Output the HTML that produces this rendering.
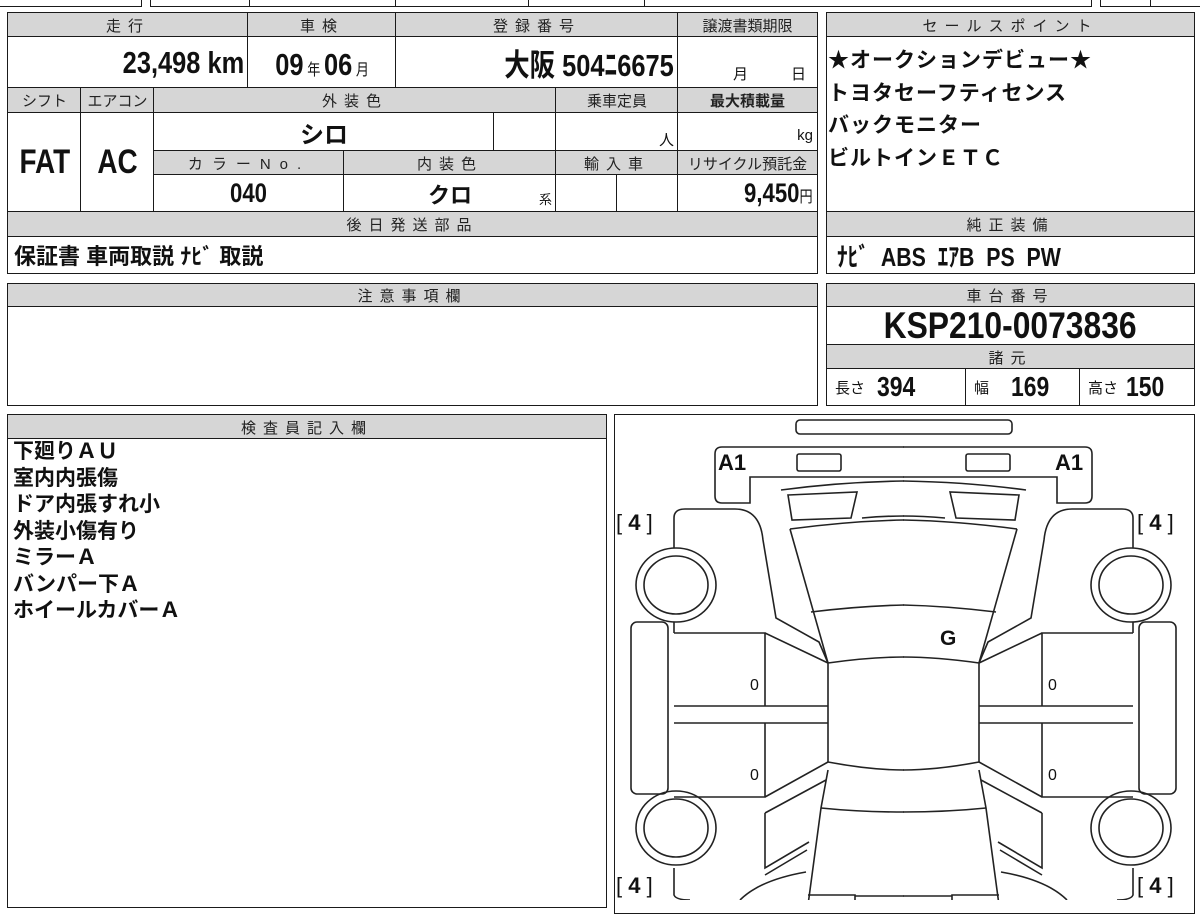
<!DOCTYPE html>
<html><head><meta charset="utf-8"><style>
body{margin:0;width:1200px;height:900px;overflow:hidden;background:#fff;position:relative;font-family:"Liberation Sans","Noto Sans CJK JP",sans-serif;color:#111}
.c{position:absolute;box-sizing:border-box;border:1.5px solid #1a1a1a;background:#fff}
.h{background:#d6d6d6;text-align:center;font-size:15px;letter-spacing:7px;color:#222;display:flex;align-items:center;justify-content:center}
.v{font-family:"Liberation Sans Narrow","Liberation Sans","Noto Sans CJK JP",sans-serif;font-weight:bold;display:flex;align-items:center}
.n{display:inline-block;transform:scaleX(.82);transform-origin:right center;white-space:nowrap}
.s{font-size:13px;font-weight:normal}
.t{position:absolute;font-weight:bold;font-family:"Liberation Sans","Noto Sans CJK JP",sans-serif}
</style></head><body>
<div class="c" style="left:-2px;top:-4px;width:144px;height:11px"></div>
<div class="c" style="left:150px;top:-4px;width:101px;height:11px"></div>
<div class="c" style="left:249px;top:-4px;width:148px;height:11px"></div>
<div class="c" style="left:395px;top:-4px;width:135px;height:11px"></div>
<div class="c" style="left:528px;top:-4px;width:118px;height:11px"></div>
<div class="c" style="left:644px;top:-4px;width:448px;height:11px"></div>
<div class="c" style="left:1100px;top:-4px;width:52px;height:11px"></div>
<div class="c" style="left:1150px;top:-4px;width:52px;height:11px"></div>

<div class="c h" style="left:7px;top:12px;width:242px;height:26px">走行</div>
<div class="c h" style="left:247px;top:12px;width:150px;height:26px">車検</div>
<div class="c h" style="left:395px;top:12px;width:284px;height:26px">登録番号</div>
<div class="c h" style="left:677px;top:12px;width:141px;height:26px;letter-spacing:0">譲渡書類期限</div>
<div class="c v" style="left:7px;top:36px;width:242px;height:53px;justify-content:flex-end;padding-right:4px;font-size:31px"><span class="n">23,498 km</span></div>
<div class="c v" style="left:247px;top:36px;width:150px;height:53px;justify-content:center;font-size:31px;padding-top:4px"><span class="n" style="transform-origin:center">09<span class="s" style="font-size:16px"> 年 </span>06<span class="s" style="font-size:16px"> 月</span></span></div>
<div class="c v" style="left:395px;top:36px;width:284px;height:53px;justify-content:flex-end;padding-right:4px;font-size:31px"><span class="n">大阪 504ﾆ6675</span></div>
<div class="c" style="left:677px;top:36px;width:141px;height:53px;font-size:15px"><span style="position:absolute;left:55px;top:26px">月</span><span style="position:absolute;left:113px;top:26px">日</span></div>

<div class="c h" style="left:7px;top:87px;width:75px;height:27px;letter-spacing:0">シフト</div>
<div class="c h" style="left:80px;top:87px;width:75px;height:27px;letter-spacing:0">エアコン</div>
<div class="c h" style="left:153px;top:87px;width:404px;height:27px">外装色</div>
<div class="c h" style="left:555px;top:87px;width:124px;height:27px;letter-spacing:0">乗車定員</div>
<div class="c h" style="left:677px;top:87px;width:141px;height:27px;letter-spacing:0;font-weight:bold">最大積載量</div>
<div class="c v" style="left:7px;top:112px;width:75px;height:101px;justify-content:center;font-size:34px"><span class="n" style="transform-origin:center">FAT</span></div>
<div class="c v" style="left:80px;top:112px;width:75px;height:101px;justify-content:center;font-size:34px"><span class="n" style="transform-origin:center">AC</span></div>
<div class="c v" style="left:153px;top:112px;width:342px;height:40px;justify-content:center;font-size:24px">シロ</div>
<div class="c" style="left:493px;top:112px;width:64px;height:40px"></div>
<div class="c" style="left:555px;top:112px;width:124px;height:40px;text-align:right;font-size:15px;padding:16px 4px 0 0">人</div>
<div class="c" style="left:677px;top:112px;width:141px;height:40px;text-align:right;font-size:15px;padding:14px 4px 0 0">kg</div>
<div class="c h" style="left:153px;top:150px;width:192px;height:26px;letter-spacing:9px">カラーNo.</div>
<div class="c h" style="left:343px;top:150px;width:214px;height:26px">内装色</div>
<div class="c h" style="left:555px;top:150px;width:124px;height:26px">輸入車</div>
<div class="c h" style="left:677px;top:150px;width:141px;height:26px;letter-spacing:0">リサイクル預託金</div>
<div class="c v" style="left:153px;top:174px;width:192px;height:39px;justify-content:center;font-size:27px"><span class="n" style="transform-origin:center">040</span></div>
<div class="c v" style="left:343px;top:174px;width:214px;height:39px;justify-content:center;font-size:22px">クロ<span class="s" style="position:absolute;right:4px;top:14px">系</span></div>
<div class="c" style="left:555px;top:174px;width:63px;height:39px"></div>
<div class="c" style="left:616px;top:174px;width:63px;height:39px"></div>
<div class="c v" style="left:677px;top:174px;width:141px;height:39px;justify-content:flex-end;padding-right:4px;font-size:27px"><span class="n">9,450<span class="s" style="font-size:16px">円</span></span></div>
<div class="c h" style="left:7px;top:211px;width:811px;height:27px">後日発送部品</div>
<div class="c v" style="left:7px;top:236px;width:811px;height:38px;font-size:22px;padding-left:6px">保証書 車両取説 ﾅﾋﾞ 取説</div>

<div class="c h" style="left:826px;top:12px;width:369px;height:26px">セールスポイント</div>
<div class="c" style="left:826px;top:36px;width:369px;height:177px;font-weight:bold;font-size:21px;line-height:32.5px;padding:8px 0 0 1px;letter-spacing:1px">★オークションデビュー★<br>トヨタセーフティセンス<br>バックモニター<br>ビルトインＥＴＣ</div>
<div class="c h" style="left:826px;top:211px;width:369px;height:27px">純正装備</div>
<div class="c v" style="left:826px;top:236px;width:369px;height:38px;font-size:26px;padding-left:10px"><span class="n" style="transform-origin:left center">ﾅﾋﾞ&nbsp; ABS&nbsp; ｴｱB&nbsp; PS&nbsp; PW</span></div>

<div class="c h" style="left:826px;top:283px;width:369px;height:25px">車台番号</div>
<div class="c v" style="left:826px;top:306px;width:369px;height:40px;justify-content:center;font-size:37px"><span class="n" style="transform-origin:center;transform:scaleX(.86)">KSP210-0073836</span></div>
<div class="c h" style="left:826px;top:344px;width:369px;height:26px">諸元</div>
<div class="c v" style="left:826px;top:368px;width:141px;height:38px;font-size:28px;padding-left:8px"><span class="s" style="font-size:15px;margin-right:12px">長さ</span><span class="n" style="transform-origin:left center">394</span></div>
<div class="c v" style="left:965px;top:368px;width:116px;height:38px;font-size:28px;padding-left:8px"><span class="s" style="font-size:15px;margin-right:22px">幅</span><span class="n" style="transform-origin:left center">169</span></div>
<div class="c v" style="left:1079px;top:368px;width:116px;height:38px;font-size:28px;padding-left:8px"><span class="s" style="font-size:15px;margin-right:8px">高さ</span><span class="n" style="transform-origin:left center">150</span></div>

<div class="c h" style="left:7px;top:283px;width:811px;height:25px">注意事項欄</div>
<div class="c" style="left:7px;top:306px;width:811px;height:100px"></div>

<div class="c h" style="left:7px;top:414px;width:600px;height:26px">検査員記入欄</div>
<div class="c" style="left:7px;top:438px;width:600px;height:470px;font-weight:bold;font-size:21px;line-height:26.5px;padding:0 0 0 5px">下廻りＡＵ<br>室内内張傷<br>ドア内張すれ小<br>外装小傷有り<br>ミラーＡ<br>バンパー下Ａ<br>ホイールカバーＡ</div>

<div class="c" style="left:614px;top:414px;width:581px;height:500px"></div>
<svg style="position:absolute;left:0;top:0" width="1200" height="900" viewBox="0 0 1200 900" fill="none" stroke="#222" stroke-width="1.6">
<rect x="796" y="420" width="216" height="14" rx="4"/>
<g id="L">
<path d="M904 447 H722 Q715 447 715 454 V496 Q715 503 722 503 H750 V477 H904"/>
<rect x="797" y="454" width="44" height="17" rx="2"/>
<path d="M781 490 Q840 482 904 481"/>
<path d="M788 495 L857 492 L851 518 L792 520 Z"/>
<path d="M862 518 Q884 516 904 516"/>
<path d="M790 529 Q850 521 904 520"/>
<path d="M811 612 Q860 606 904 605"/>
<path d="M790 529 L828 663"/>
<path d="M674 548 V518 Q674 509 685 509 H735 Q760 509 763 540 L776 618 L819 642 L828 663"/>
<path d="M828 663 Q870 657 904 657 M828 663 V762 Q870 770 904 770"/>
<path d="M674 633 H765 V706 H674 M674 723 H765 V797 H674 M765 633 L828 663 M765 797 L828 762 M674 706 H828 M674 723 H828 M674 633 V622"/>
<rect x="631" y="622" width="37" height="172" rx="6"/>
<ellipse cx="676" cy="585" rx="40" ry="37"/>
<ellipse cx="676" cy="585" rx="32" ry="29"/>
<ellipse cx="676" cy="828" rx="40" ry="37"/>
<ellipse cx="676" cy="828" rx="32" ry="29"/>
<path d="M821 808 Q860 812 904 812"/>
<path d="M828 770 L821 808 L808 905"/>
<path d="M765 813 L826 780 M765 813 V868 L809 842 M765 875 L807 850"/>
<path d="M674 868 V895 Q676 900 690 900 M740 900 Q760 880 806 872"/>
<path d="M808 895 H855 V905 M855 896 H904"/>
</g>
<use href="#L" transform="translate(1807,0) scale(-1,1)"/>
</svg>
<div class="t" style="left:718px;top:450px;font-size:22px">A1</div>
<div class="t" style="left:1055px;top:450px;font-size:22px">A1</div>
<div class="t" style="left:940px;top:627px;font-size:21px">G</div>
<div style="position:absolute;left:750px;top:677px;font-size:16px">0</div>
<div style="position:absolute;left:750px;top:767px;font-size:16px">0</div>
<div style="position:absolute;left:1048px;top:677px;font-size:16px">0</div>
<div style="position:absolute;left:1048px;top:767px;font-size:16px">0</div>
<div style="position:absolute;left:616px;top:510px;font-size:22px;white-space:pre">[ <b>4</b> ]</div>
<div style="position:absolute;left:1137px;top:510px;font-size:22px;white-space:pre">[ <b>4</b> ]</div>
<div style="position:absolute;left:616px;top:873px;font-size:22px;white-space:pre">[ <b>4</b> ]</div>
<div style="position:absolute;left:1137px;top:873px;font-size:22px;white-space:pre">[ <b>4</b> ]</div>
</body></html>
